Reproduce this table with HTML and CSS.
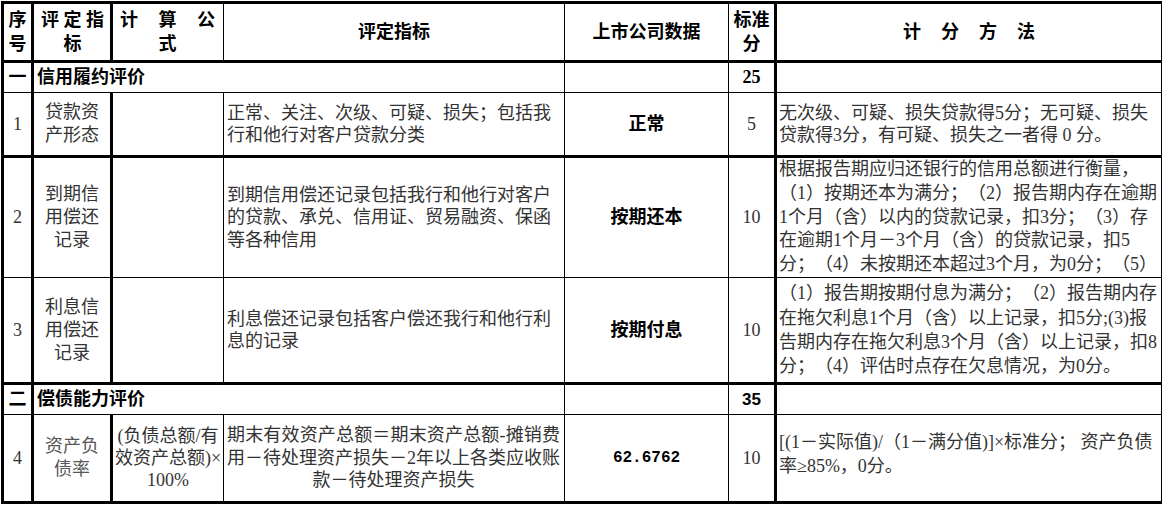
FILE: index.html
```html
<!DOCTYPE html>
<html lang="zh-CN">
<head>
<meta charset="utf-8">
<title>评定指标</title>
<link rel="stylesheet" href="styles.css">
</head>
<body>
<table class="sheet">
  <colgroup>
    <col class="c-no"><col class="c-name"><col class="c-formula"><col class="c-desc"><col class="c-data"><col class="c-score"><col class="c-method">
  </colgroup>
  <tr class="r-head">
    <th class="no"><span class="ln">序</span><span class="ln">号</span></th>
    <th class="dist d-name"><span class="ln jl">评定指</span><span class="ln">标</span></th>
    <th class="dist d-formula"><span class="ln jl">计算公</span><span class="ln">式</span></th>
    <th>评定指标</th>
    <th>上市公司数据</th>
    <th class="no"><span class="ln">标准</span><span class="ln">分</span></th>
    <th class="spaced">计分方法</th>
  </tr>
  <tr class="r-sec">
    <td class="sec-no">一</td>
    <td colspan="3" class="sec-title">信用履约评价</td>
    <td></td>
    <td class="num bold">25</td>
    <td></td>
  </tr>
  <tr class="r1 thick-b">
    <td class="num">1</td>
    <td class="name"><span class="ln">贷款资</span><span class="ln">产形态</span></td>
    <td></td>
    <td class="desc"><span class="ln">正常、关注、次级、可疑、损失；包括我</span><span class="ln">行和他行对客户贷款分类</span></td>
    <td class="data">正常</td>
    <td class="num">5</td>
    <td class="method"><span class="ln">无次级、可疑、损失贷款得5分；无可疑、损失</span><span class="ln">贷款得3分，有可疑、损失之一者得 0 分。</span></td>
  </tr>
  <tr class="r2">
    <td class="num">2</td>
    <td class="name"><span class="ln">到期信</span><span class="ln">用偿还</span><span class="ln">记录</span></td>
    <td></td>
    <td class="desc"><span class="ln">到期信用偿还记录包括我行和他行对客户</span><span class="ln">的贷款、承兑、信用证、贸易融资、保函</span><span class="ln">等各种信用</span></td>
    <td class="data">按期还本</td>
    <td class="num">10</td>
    <td class="method tall"><div class="clip"><span class="ln">根据报告期应归还银行的信用总额进行衡量，</span><span class="ln">（1）按期还本为满分；（2）报告期内存在逾期</span><span class="ln">1个月（含）以内的贷款记录，扣3分；（3）存</span><span class="ln">在逾期1个月－3个月（含）的贷款记录，扣5</span><span class="ln">分；（4）未按期还本超过3个月，为0分；（5）</span></div></td>
  </tr>
  <tr class="r3 thick-b">
    <td class="num">3</td>
    <td class="name"><span class="ln">利息信</span><span class="ln">用偿还</span><span class="ln">记录</span></td>
    <td></td>
    <td class="desc"><span class="ln">利息偿还记录包括客户偿还我行和他行利</span><span class="ln">息的记录</span></td>
    <td class="data">按期付息</td>
    <td class="num">10</td>
    <td class="method tall"><span class="ln">（1）报告期按期付息为满分；（2）报告期内存</span><span class="ln">在拖欠利息1个月（含）以上记录，扣5分;(3)报</span><span class="ln">告期内存在拖欠利息3个月（含）以上记录，扣8</span><span class="ln">分；（4）评估时点存在欠息情况，为0分。</span></td>
  </tr>
  <tr class="r-sec">
    <td class="sec-no">二</td>
    <td colspan="3" class="sec-title">偿债能力评价</td>
    <td></td>
    <td class="num bold narrow">35</td>
    <td></td>
  </tr>
  <tr class="r4">
    <td class="num">4</td>
    <td class="name light"><span class="ln">资产负</span><span class="ln">债率</span></td>
    <td class="formula"><span class="ln">(负债总额/有</span><span class="ln">效资产总额)×</span><span class="ln">100%</span></td>
    <td class="desc centered"><span class="ln jl">期末有效资产总额＝期末资产总额-摊销费</span><span class="ln jl">用－待处理资产损失－2年以上各类应收账</span><span class="ln">款－待处理资产损失</span></td>
    <td class="data mono">62.6762</td>
    <td class="num">10</td>
    <td class="method r4m"><span class="ln">[(1－实际值)/（1－满分值)]×标准分； 资产负债</span><span class="ln">率≥85%，0分。</span></td>
  </tr>
</table>
</body>
</html>
```
FILE: styles.css
```css
html, body {
  margin: 0;
  padding: 0;
  background: #fff;
}

body {
  padding: 0 0 0 1px;
  font-family: "Liberation Serif", "Noto Sans CJK SC", serif;
  color: #333;
  text-spacing-trim: space-all;
}

.sheet {
  border-collapse: collapse;
  table-layout: fixed;
  width: 1160px;
  border: 3px solid #000;
  margin-top: 1px;
}

.c-no { width: 30px; }
.c-name { width: 79px; }
.c-formula { width: 112px; }
.c-desc { width: 341px; }
.c-data { width: 164px; }
.c-score { width: 47px; }
.c-method { width: 387px; }

.sheet td,
.sheet th {
  border: 1px solid #000;
  padding: 0 3px;
  vertical-align: middle;
  font-size: 18px;
  line-height: 23px;
  overflow: hidden;
  white-space: nowrap;
}

.sheet tr > :nth-child(1) { border-right-width: 3px; }
.sheet tr:not(.r-sec) > :nth-child(2) { border-right-width: 3px; }
.sheet tr > :last-child { border-left-width: 3px; }

.r-head > th { border-bottom-width: 3px; }
.thick-b > td { border-bottom-width: 3px; }

.r-head { height: 59px; }
.r-sec { height: 31px; }
.r1 { height: 64px; }
.r2 { height: 120px; }
.r3 { height: 106px; }
.r4 { height: 88px; }

.ln { display: block; }

.sheet th {
  font-family: "Liberation Sans", "Noto Sans CJK SC", sans-serif;
  font-weight: 700;
  color: #000;
  text-align: center;
  line-height: 24px;
}

.sheet th.no { padding: 0; }

.dist .jl {
  text-align: justify;
  text-align-last: justify;
}
.sheet .d-name { padding: 0 6px 0 7px; }
.sheet .d-formula { padding: 0 8px 0 7px; }

.sheet .spaced {
  letter-spacing: 20px;
  padding-left: 23px;
}

.sec-no,
.sec-title {
  font-family: "Liberation Sans", "Noto Sans CJK SC", sans-serif;
  font-weight: 700;
  color: #000;
}

.sheet .sec-no {
  text-align: center;
  padding: 0;
}

.sheet .sec-title {
  text-align: left;
  padding-left: 3px;
}

.sheet .num {
  text-align: center;
  padding: 0;
}

.bold {
  font-weight: 700;
  color: #000;
}

.sheet .narrow {
  font-family: "Liberation Sans Narrow", "Liberation Sans", sans-serif;
  font-size: 17px;
}

.sheet .name {
  text-align: center;
  padding: 0;
}

.light { color: #555; }

.sheet .formula {
  text-align: center;
  padding: 0;
  line-height: 22px;
}

.sheet .desc {
  padding-left: 3px;
  padding-right: 4px;
  line-height: 22.5px;
}

.centered .ln { text-align: center; }
.centered .jl {
  text-align: justify;
  text-align-last: justify;
}

.data {
  font-family: "Liberation Sans", "Noto Sans CJK SC", sans-serif;
  font-weight: 700;
  color: #000;
  text-align: center;
}

.sheet .mono {
  font-family: "Liberation Mono", monospace;
  font-size: 16px;
}

.sheet .method {
  padding-left: 2px;
  line-height: 22px;
}

.sheet .method.tall { line-height: 24.4px; }

.clip {
  height: 119px;
  line-height: 23.8px;
  overflow: hidden;
}

.sheet .r4m {
  line-height: 24px;
  padding-bottom: 8px;
}
```
